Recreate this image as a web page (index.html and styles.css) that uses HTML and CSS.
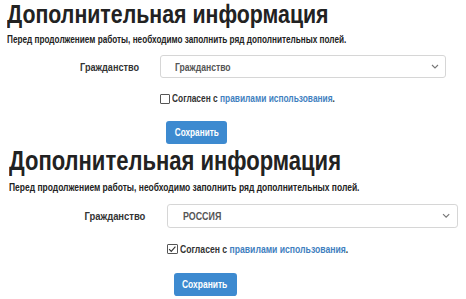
FILE: index.html
```html
<!DOCTYPE html>
<html lang="ru">
<head>
  <meta charset="UTF-8" />
  <meta name="viewport" content="width=device-width, initial-scale=1" />
  <title>Дополнительная информация</title>
  <link rel="stylesheet" href="styles.css">
</head>
<body>
  <div class="panel">
    <h1><span class="cond">Дополнительная информация</span></h1>
    <p class="lead"><span class="cond">Перед продолжением работы, необходимо заполнить ряд дополнительных полей.</span></p>
    <div class="form-grid">
      <label class="field-label"><span class="cond">Гражданство</span></label>
      <div class="select-box">
        <span class="cond select-value">Гражданство</span>
        <svg class="chevron" width="8" height="5" viewBox="0 0 8 5"><path d="M1 1l3 3 3-3" fill="none" stroke="#777" stroke-width="1.1"/></svg>
      </div>
      <div class="agree">
        <span class="check"></span>
        <span class="cond">Согласен с <a href="#">правилами использования</a>.</span>
      </div>
      <div class="actions">
        <button class="btn"><span class="cond">Сохранить</span></button>
      </div>
    </div>
  </div>

  <div class="panel panel-big">
    <h1><span class="cond">Дополнительная информация</span></h1>
    <p class="lead"><span class="cond">Перед продолжением работы, необходимо заполнить ряд дополнительных полей.</span></p>
    <div class="form-grid">
      <label class="field-label"><span class="cond">Гражданство</span></label>
      <div class="select-box">
        <span class="cond select-value">РОССИЯ</span>
        <svg class="chevron" width="8" height="5" viewBox="0 0 8 5"><path d="M1 1l3 3 3-3" fill="none" stroke="#777" stroke-width="1.1"/></svg>
      </div>
      <div class="agree">
        <span class="check">
          <svg width="9" height="8" viewBox="0 0 9 8"><path d="M1.2 4l2.3 2.4L8 1.2" fill="none" stroke="#333" stroke-width="1.2"/></svg>
        </span>
        <span class="cond">Согласен с <a href="#">правилами использования</a>.</span>
      </div>
      <div class="actions">
        <button class="btn"><span class="cond">Сохранить</span></button>
      </div>
    </div>
  </div>
</body>
</html>
```

FILE: styles.css
```css
body {
  margin: 0;
  background: #fff;
  color: #222;
  font-family: "Liberation Sans", Arial, sans-serif;
}
/* Arial Narrow is not available: squeeze Arial-width text instead */
.cond {
  display: inline-block;
  white-space: nowrap;
  transform: scaleX(0.82);
  transform-origin: left center;
}
.panel {
  padding: 0 0 0 7px;
  height: 147px;
  box-sizing: border-box;
}
.panel-big {
  zoom: 1.033;
  padding-left: 9px;
}
h1 {
  margin: 0;
  font-size: 26px;
  line-height: 29px;
  font-weight: 700;
  color: #222;
}
.lead {
  margin: 5px 0 0;
  font-size: 10px;
  line-height: 12px;
  font-weight: 700;
  color: #222;
}
.form-grid {
  display: grid;
  grid-template-columns: 132px 286px;
  column-gap: 21px;
  margin-top: 9px;
}
.panel-big .form-grid {
  grid-template-columns: 132px 281px;
}
.field-label {
  justify-self: end;
  align-self: center;
  font-size: 11px;
  font-weight: 700;
  color: #333;
}
.field-label .cond {
  transform: scaleX(0.83);
  transform-origin: right center;
}
.select-box {
  height: 23px;
  box-sizing: border-box;
  border: 1px solid #d6d6d6;
  border-radius: 3px;
  display: flex;
  align-items: center;
  justify-content: space-between;
  padding: 0 6px 0 14px;
  font-size: 10.5px;
  font-weight: 700;
  color: #555;
}
.agree {
  grid-column: 2;
  display: flex;
  align-items: center;
  gap: 2px;
  margin-top: 15px;
  font-size: 10.2px;
  font-weight: 700;
  color: #333;
}
.agree a {
  color: #3f7fc0;
  text-decoration: none;
}
.check {
  width: 10px;
  height: 10px;
  box-sizing: border-box;
  border: 1px solid #555;
  border-radius: 1px;
  display: flex;
  align-items: center;
  justify-content: center;
}
.actions {
  grid-column: 2;
  margin-top: 17px;
}
.btn {
  margin-left: 6px;
  width: 61px;
  height: 23px;
  border: none;
  border-radius: 3px;
  background: #3d8ad0;
  color: #fff;
  font-family: inherit;
  font-size: 10px;
  font-weight: 700;
  padding: 0;
}
.btn .cond {
  transform-origin: center;
}
```
